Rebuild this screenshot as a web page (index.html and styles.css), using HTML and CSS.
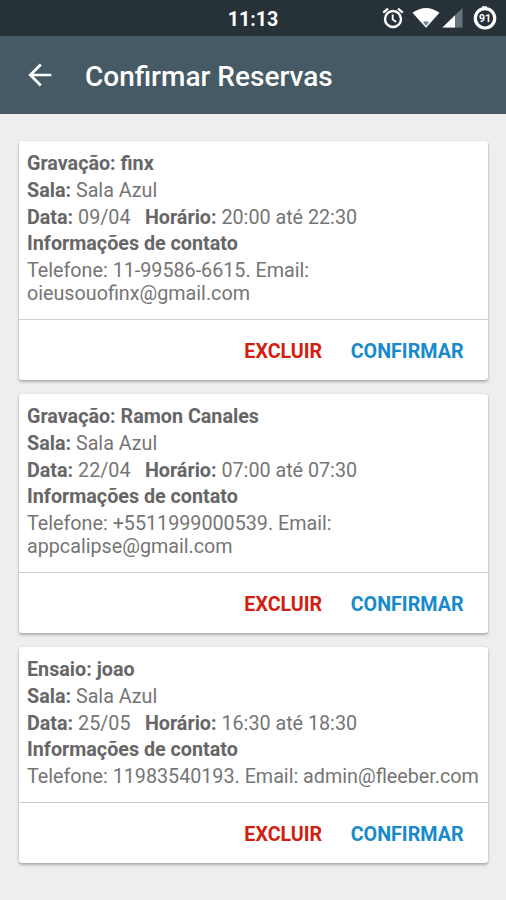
FILE: index.html
```html
<!DOCTYPE html>
<html lang="pt-BR">
<head>
<meta charset="utf-8">
<title>Confirmar Reservas</title>
<link rel="stylesheet" href="styles.css">
</head>
<body>
<div class="status">
  <time class="clock">11:13</time>
  <div class="status-icons">
    <svg class="alarm" width="22" height="22" viewBox="0 0 22 22" fill="none" stroke="#fff">
      <circle cx="11" cy="12" r="8" stroke-width="2.4"/>
      <path d="M1.2 5.7 6 1.7M20.8 5.7 16 1.7" stroke-width="2.4"/>
      <path d="M10.7 7.5v5l3.6 2.6" stroke-width="1.8"/>
    </svg>
    <svg class="wifi" width="28" height="20" viewBox="0 0 28 20">
      <path d="M.5 4.8Q14-4.8 27.5 4.8L14 19.8Z" fill="#fff"/>
      <path d="m11 14.3q3-2 6 0L14 18Z" fill="#78858b"/>
    </svg>
    <svg class="signal" width="21" height="20" viewBox="0 0 21 20">
      <path d="M20.5 0v19.5H.5Z" fill="#67747a"/>
      <path d="M13 7.3v12.2H.5Z" fill="#fff"/>
    </svg>
    <svg class="battery" width="24" height="24" viewBox="0 0 24 24">
      <circle cx="12" cy="12.3" r="9.7" fill="none" stroke="#fff" stroke-width="3.2"/>
      <path d="M9 1h5" stroke="#fff" stroke-width="1.5"/>
      <text class="level" x="12" y="16" text-anchor="middle">91</text>
    </svg>
  </div>
</div>
<header class="appbar">
  <svg class="back" width="24" height="24" viewBox="0 0 24 24" fill="none" stroke="#fff" stroke-width="2.7">
    <path d="M23.3 12H2.5M12.8 1.5 2.3 12l10.5 10.5"/>
  </svg>
  <h1>Confirmar Reservas</h1>
</header>
<main class="list">
  <article class="card">
    <div class="details">
      <p><b>Gravação: finx</b></p>
      <p><b>Sala:</b> Sala Azul</p>
      <p><b>Data:</b> 09/04 <b class="hour">Horário:</b> 20:00 até 22:30</p>
      <p><b>Informações de contato</b></p>
      <p>Telefone: 11-99586-6615. Email:<br>oieusouofinx@gmail.com</p>
    </div>
    <div class="actions"><a class="delete">EXCLUIR</a><a class="confirm">CONFIRMAR</a></div>
  </article>
  <article class="card">
    <div class="details">
      <p><b>Gravação: Ramon Canales</b></p>
      <p><b>Sala:</b> Sala Azul</p>
      <p><b>Data:</b> 22/04 <b class="hour">Horário:</b> 07:00 até 07:30</p>
      <p><b>Informações de contato</b></p>
      <p>Telefone: +5511999000539. Email:<br>appcalipse@gmail.com</p>
    </div>
    <div class="actions"><a class="delete">EXCLUIR</a><a class="confirm">CONFIRMAR</a></div>
  </article>
  <article class="card">
    <div class="details">
      <p><b>Ensaio: joao</b></p>
      <p><b>Sala:</b> Sala Azul</p>
      <p><b>Data:</b> 25/05 <b class="hour">Horário:</b> 16:30 até 18:30</p>
      <p><b>Informações de contato</b></p>
      <p>Telefone: 11983540193. Email: admin@fleeber.com</p>
    </div>
    <div class="actions"><a class="delete">EXCLUIR</a><a class="confirm">CONFIRMAR</a></div>
  </article>
</main>
</body>
</html>
```
FILE: styles.css
```css
* { box-sizing: border-box; }
body {
  margin: 0;
  min-height: 900px;
  background: #eee;
  color: #757575;
  font: 19.73px/23px Roboto, sans-serif;
}
.status {
  display: grid;
  grid-template-columns: 1fr auto 1fr;
  align-items: center;
  height: 36px;
  background: #263238;
  color: #fff;
}
.clock {
  grid-column: 2;
  font-size: 19.7px;
  font-weight: 700;
  padding-top: 2px;
}
.status-icons {
  display: flex;
  justify-content: flex-end;
  align-items: center;
  padding-right: 9px;
}
.alarm { margin-right: 8px; }
.wifi { margin-right: 2px; }
.signal { margin-right: 10px; }
.level { font: 700 10.5px Roboto, sans-serif; fill: #fff; }
.appbar {
  display: flex;
  align-items: center;
  height: 78px;
  padding-left: 28px;
  background: #455a64;
  color: #fff;
}
h1 {
  margin: 4px 0 0 33px;
  font-size: 28px;
  line-height: 34px;
  font-weight: 500;
}
.list {
  display: flex;
  flex-direction: column;
  gap: 14px;
  padding: 27px 18px 0 19px;
}
.card {
  background: #fff;
  border-radius: 3px;
  box-shadow: 0 2px 3px rgba(0, 0, 0, .26), 0 0 2px rgba(0, 0, 0, .12);
}
.details {
  display: flex;
  flex-direction: column;
  gap: 3.75px;
  padding: 11px 0 13.5px 8px;
  white-space: nowrap;
}
p { margin: 0; }
b { font-weight: 700; color: #666; }
.hour { margin-left: 9.5px; }
.actions {
  display: flex;
  justify-content: flex-end;
  align-items: center;
  gap: 28.5px;
  height: 61.5px;
  padding: 3px 24.5px 0 0;
  border-top: 1px solid #ccced2;
  font-size: 19.7px;
  font-weight: 700;
}
.delete { color: #d31e11; }
.confirm { color: #168acb; }
```
